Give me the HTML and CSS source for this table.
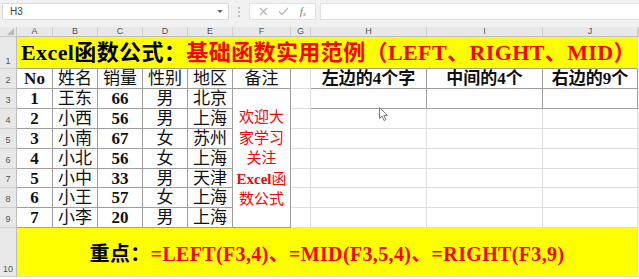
FILE: index.html
```html
<!DOCTYPE html>
<html lang="zh">
<head>
<meta charset="utf-8">
<title>Excel函数公式</title>
<link rel="stylesheet" href="styles.css">
</head>
<body>
<div class="app">
  <div class="fbar">
    <div class="namebox"><span class="ref">H3</span><span class="dd"></span></div>
    <div class="dots"><i></i><i></i><i></i></div>
    <div class="btns">
      <svg class="ic" width="9" height="9" viewBox="0 0 9 9"><path d="M1 1 L8 8 M8 1 L1 8" stroke="#b4b4b4" stroke-width="1.2" fill="none"/></svg>
      <svg class="ic" width="11" height="9" viewBox="0 0 11 9"><path d="M1 4.5 L4 7.5 L10 1" stroke="#b4b4b4" stroke-width="1.2" fill="none"/></svg>
      <span class="fx">f<sub>x</sub></span>
    </div>
    <div class="input"></div>
  </div>

  <div class="sheet">
    <div class="corner"><span class="tri"></span></div>
    <div class="ch">A</div><div class="ch">B</div><div class="ch">C</div><div class="ch">D</div><div class="ch">E</div><div class="ch">F</div><div class="ch">G</div><div class="ch">H</div><div class="ch">I</div><div class="ch">J</div><div class="ch edge"></div>

    <div class="rh tall">1</div>
    <div class="c title span10"><b class="blk">Excel函数公式：</b><b class="red">基础函数实用范例（LEFT、RIGHT、MID）</b></div>
    <div class="c edge"></div>

    <div class="rh">2</div>
    <div class="c t hd lat">No</div><div class="c t hd">姓名</div><div class="c t hd">销量</div><div class="c t hd">性别</div><div class="c t hd">地区</div><div class="c t hd">备注</div>
    <div class="c"></div>
    <div class="c t hd2">左边的4个字</div><div class="c t hd2">中间的4个</div><div class="c t hd2">右边的9个</div>
    <div class="c edge"></div>

    <div class="rh">3</div>
    <div class="c t num">1</div><div class="c t">王东</div><div class="c t num">66</div><div class="c t">男</div><div class="c t">北京</div>
    <div class="c t note"><div class="lines"><div>欢迎大</div><div>家学习</div><div>关注</div><div><b>Excel</b>函</div><div>数公式</div></div></div>
    <div class="c"></div>
    <div class="c t"></div><div class="c t"></div><div class="c t"></div>
    <div class="c edge"></div>

    <div class="rh">4</div>
    <div class="c t num">2</div><div class="c t">小西</div><div class="c t num">56</div><div class="c t">男</div><div class="c t">上海</div>
    <div class="c"></div><div class="c"></div><div class="c"></div><div class="c"></div><div class="c edge"></div>

    <div class="rh">5</div>
    <div class="c t num">3</div><div class="c t">小南</div><div class="c t num">67</div><div class="c t">女</div><div class="c t">苏州</div>
    <div class="c"></div><div class="c"></div><div class="c"></div><div class="c"></div><div class="c edge"></div>

    <div class="rh">6</div>
    <div class="c t num">4</div><div class="c t">小北</div><div class="c t num">56</div><div class="c t">女</div><div class="c t">上海</div>
    <div class="c"></div><div class="c"></div><div class="c"></div><div class="c"></div><div class="c edge"></div>

    <div class="rh">7</div>
    <div class="c t num">5</div><div class="c t">小中</div><div class="c t num">33</div><div class="c t">男</div><div class="c t">天津</div>
    <div class="c"></div><div class="c"></div><div class="c"></div><div class="c"></div><div class="c edge"></div>

    <div class="rh">8</div>
    <div class="c t num">6</div><div class="c t">小王</div><div class="c t num">57</div><div class="c t">女</div><div class="c t">上海</div>
    <div class="c"></div><div class="c"></div><div class="c"></div><div class="c"></div><div class="c edge"></div>

    <div class="rh">9</div>
    <div class="c t num">7</div><div class="c t">小李</div><div class="c t num">20</div><div class="c t">男</div><div class="c t">上海</div>
    <div class="c"></div><div class="c"></div><div class="c"></div><div class="c"></div><div class="c edge"></div>

    <div class="rh tall">10</div>
    <div class="c key span10"><b class="blk">重点：</b><b class="red">=LEFT(F3,4)、=MID(F3,5,4)、=RIGHT(F3,9)</b></div>
    <div class="c edge"></div>
  </div>

  <svg class="cursor" width="10" height="15" viewBox="0 0 10 15"><path d="M0.5 0.5 L0.5 11.5 L3 9 L5 13.5 L6.8 12.7 L4.9 8.4 L8.3 8.4 Z" fill="#fff" stroke="#7a7a7a" stroke-width="1"/></svg>
</div>
</body>
</html>
```

FILE: styles.css
```css
* { box-sizing: border-box; }
html, body { margin: 0; padding: 0; background: #fff; }
.app { position: relative; width: 639px; height: 279px; overflow: hidden; background: #fff; font-family: "Liberation Serif", "Noto Sans CJK SC", serif; }

.fbar { height: 27px; background: #f1f1f1; display: flex; align-items: flex-start; padding-top: 3px; }
.namebox { margin-left: 2px; width: 227px; height: 17px; background: #fff; border: 1px solid #dcdcdc; display: flex; align-items: center; justify-content: space-between; padding: 0 5px 0 7px; }
.ref { font-family: "Liberation Sans", Arial, sans-serif; font-size: 10px; color: #444; }
.dd { width: 0; height: 0; border-left: 3px solid transparent; border-right: 3px solid transparent; border-top: 3px solid #666; }
.dots { width: 20px; height: 17px; display: flex; flex-direction: column; align-items: center; justify-content: center; gap: 2px; }
.dots i { width: 2px; height: 2px; background: #c2c2c2; display: block; }
.btns { width: 67px; height: 17px; background: #fff; border: 1px solid #e2e2e2; display: flex; align-items: center; justify-content: space-around; padding: 0 4px; }
.fx { font-family: "Liberation Serif", serif; font-style: italic; font-size: 11px; color: #777; line-height: 1; }
.fx sub { font-size: 7px; vertical-align: -1px; }
.input { margin-left: 4px; flex: 1; height: 17px; background: #fff; border: 1px solid #e2e2e2; border-right: none; }

.sheet { display: grid; grid-template-columns: 17px 36px 45px 45px 45px 45px 58px 20px 116px 116px 95px 1px; grid-template-rows: 10px 32px 20px 20px 20px 20px 20px 19px 20px 20px 49px; }
.corner { background: #e8e8e8; border-right: 1px solid #c8c8c8; border-bottom: 1px solid #c8c8c8; position: relative; }
.tri { position: absolute; right: 2px; bottom: 1px; width: 0; height: 0; border-left: 7px solid transparent; border-bottom: 7px solid #b9b9b9; }
.ch { background: #e8e8e8; border-right: 1px solid #cfcfcf; border-bottom: 1px solid #bdbdbd; font-family: "Liberation Sans", Arial, sans-serif; font-size: 9px; color: #555; display: flex; align-items: center; justify-content: center; line-height: 1; }
.rh { background: #e8e8e8; border-right: 1px solid #bdbdbd; border-bottom: 1px solid #d0d0d0; font-family: "Liberation Sans", Arial, sans-serif; font-size: 9px; color: #555; display: flex; align-items: flex-end; justify-content: center; padding-bottom: 3px; line-height: 1; }
.rh.tall { padding-bottom: 2px; }

.c { border-right: 1px solid #dedede; border-bottom: 1px solid #dedede; display: flex; align-items: center; justify-content: center; font-size: 17px; color: #111; white-space: nowrap; line-height: 1; }
.c.edge { border-right: none; background: #f4f4f4; }
.c.t { border-color: #9e9e9e; }
.span10 { grid-column: span 10; }
.title { background: #ff0; border-bottom-color: #9e9e9e; font-size: 22px; letter-spacing: 0.4px; justify-content: flex-start; padding-left: 4px; padding-top: 1px; }
.blk { color: #000; font-weight: bold; }
.red { color: #f00; font-weight: bold; }
.hd { font-weight: normal; }
.lat, .num { font-weight: bold; }
.hd2 { font-weight: bold; font-size: 17px; }
.note { grid-row: span 7; color: #f00; font-size: 15px; padding-top: 1px; }
.lines { line-height: 20.5px; text-align: center; }
.lines b { font-weight: bold; }
.key { background: #ff0; font-size: 20px; letter-spacing: 0.35px; padding-top: 4px; }

.cursor { position: absolute; left: 379px; top: 107px; }
```
